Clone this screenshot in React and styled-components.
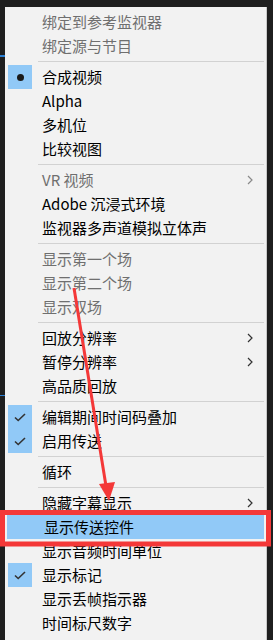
import React from "react";
import styled, { createGlobalStyle } from "styled-components";

const Global = createGlobalStyle`
  html, body { margin: 0; padding: 0; background: #1f1f1f; }
  body { width: 273px; height: 640px; overflow: hidden; }
  #root { width: 273px; height: 640px; }
`;

const Page = styled.div`
  position: relative;
  width: 273px;
  height: 640px;
  box-sizing: border-box;
  padding: 7px 5px 0 5px;
  background: #1f1f1f;
  overflow: hidden;
`;

const Menu = styled.div`
  width: 262px;
  height: 633px;
  box-sizing: border-box;
  padding-top: 3px;
  background: #f2f2f2;
  border-right: 1px solid #c9c9c9;
  font-family: "Noto Sans CJK SC", "Microsoft YaHei", sans-serif;
  font-size: 15px;
  display: flex;
  flex-direction: column;
`;

const Row = styled.div`
  display: grid;
  grid-template-columns: 3px 24px 10px 1fr 20px;
  height: 24px;
  line-height: 24px;
  color: ${(p) => (p.$disabled ? "#6f6f6f" : "#000")};
  background: ${(p) => (p.$hover ? "#91c9f7" : "transparent")};
  margin-right: ${(p) => (p.$hover ? "2px" : "0")};
  margin-left: ${(p) => (p.$hover ? "2px" : "0")};
  white-space: nowrap;
`;

const IconCell = styled.div`
  grid-column: 2;
  height: 24px;
  display: flex;
  align-items: center;
  justify-content: center;
  background: ${(p) => (p.$on ? "#91c9f7" : "transparent")};
`;

const Label = styled.div`
  grid-column: 4;
`;

const Chevron = styled.div`
  grid-column: 5;
  display: flex;
  align-items: center;
  justify-content: flex-start;
  padding-left: 1px;
`;

const Separator = styled.div`
  height: 7px;
  display: flex;
  align-items: center;
  padding-left: 33px;
  padding-right: 2px;
  &::after {
    content: "";
    flex: 1;
    height: 1px;
    background: #d2d2d2;
  }
`;

const Dot = styled.span`
  width: 7px;
  height: 7px;
  border-radius: 50%;
  background: #1a1a1a;
`;

const Overlay = styled.svg`
  position: absolute;
  left: 0;
  top: 0;
  pointer-events: none;
`;

const Check = () => (
  <svg width="12" height="9" viewBox="0 0 12 9">
    <path d="M1 4.5 L4.2 7.5 L11 1" fill="none" stroke="#333" strokeWidth="1.6" />
  </svg>
);

const Arrow = ({ disabled }) => (
  <svg width="6" height="10" viewBox="0 0 6 10">
    <path d="M1 1 L5 5 L1 9" fill="none" stroke={disabled ? "#8a8a8a" : "#333"} strokeWidth="1.2" />
  </svg>
);

const groups = [
  [
    { t: "绑定到参考监视器", d: true },
    { t: "绑定源与节目", d: true },
  ],
  [
    { t: "合成视频", icon: "dot" },
    { t: "Alpha" },
    { t: "多机位" },
    { t: "比较视图" },
  ],
  [
    { t: "VR 视频", d: true, sub: true },
    { t: "Adobe 沉浸式环境" },
    { t: "监视器多声道模拟立体声" },
  ],
  [
    { t: "显示第一个场", d: true },
    { t: "显示第二个场", d: true },
    { t: "显示双场", d: true },
  ],
  [
    { t: "回放分辨率", sub: true },
    { t: "暂停分辨率", sub: true },
    { t: "高品质回放" },
  ],
  [
    { t: "编辑期间时间码叠加", icon: "check" },
    { t: "启用传送", icon: "check" },
  ],
  [{ t: "循环" }],
  [
    { t: "隐藏字幕显示", sub: true },
    { t: "显示传送控件", hover: true },
    { t: "显示音频时间单位" },
    { t: "显示标记", icon: "check" },
    { t: "显示丢帧指示器" },
    { t: "时间标尺数字" },
  ],
];

export default function App() {
  return (
    <Page>
      <Global />
      <Menu>
        {groups.map((g, gi) => (
          <React.Fragment key={gi}>
            {gi > 0 && <Separator />}
            {g.map((it) => (
              <Row key={it.t} $disabled={it.d} $hover={it.hover}>
                <IconCell $on={!!it.icon}>
                  {it.icon === "dot" && <Dot />}
                  {it.icon === "check" && <Check />}
                </IconCell>
                <Label>{it.t}</Label>
                {it.sub && (
                  <Chevron>
                    <Arrow disabled={it.d} />
                  </Chevron>
                )}
              </Row>
            ))}
          </React.Fragment>
        ))}
      </Menu>
      <Overlay width="273" height="640" viewBox="0 0 273 640">
        <rect x="0" y="55" width="5" height="2" fill="#2a7fd4" />
        <rect x="0" y="395" width="5" height="1" fill="#2a7fd4" />
        <rect x="2.5" y="512.5" width="266" height="31.5" fill="none" stroke="#f43838" strokeWidth="5" />
        <line x1="74" y1="288" x2="106" y2="486" stroke="#f43838" strokeWidth="3" />
        <path d="M99 484 L115 482 L109 501 Z" fill="#f43838" />
      </Overlay>
    </Page>
  );
}
